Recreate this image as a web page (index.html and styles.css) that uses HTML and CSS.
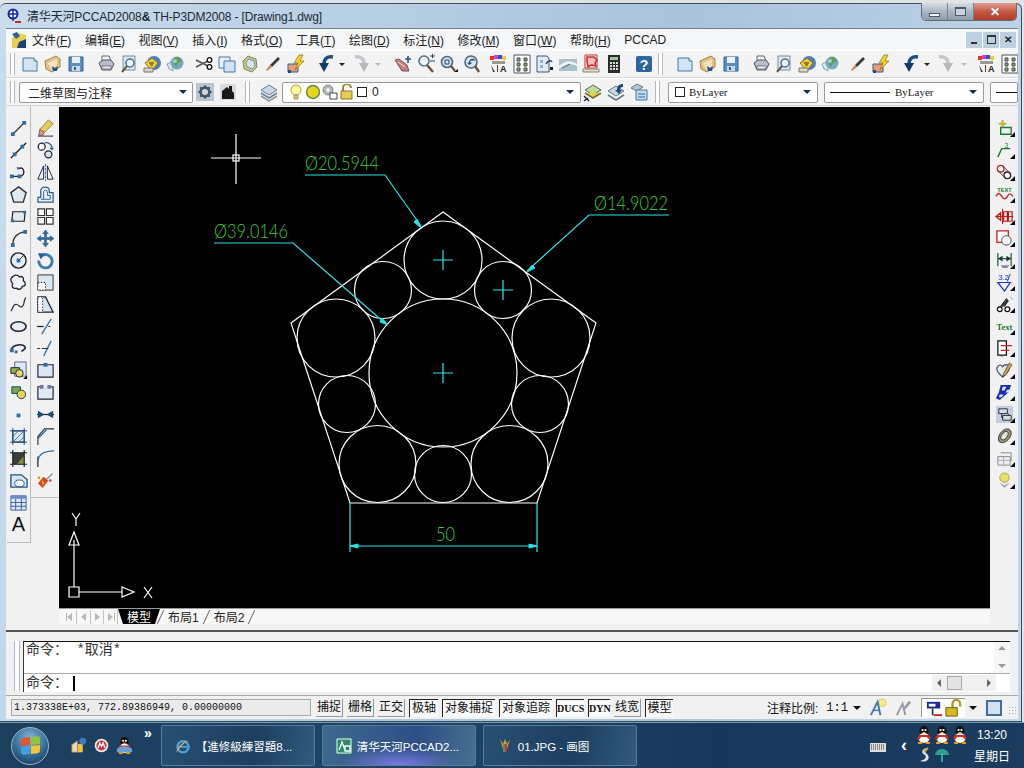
FILE: index.html
```html
<!DOCTYPE html>
<html lang="zh-CN">
<head>
  <meta charset="UTF-8">
  <title>清华天河PCCAD2008</title>
  <link rel="stylesheet" href="styles.css">
</head>
<body>
<svg class="sprite" xmlns="http://www.w3.org/2000/svg">
  <!-- standard toolbar -->
  <symbol id="new" viewBox="0 0 20 20"><path d="M3 4h11l3 3v10H3z" fill="#d3e5f4" stroke="#47799f"/><path d="M14 4v3h3" fill="#fff" stroke="#47799f"/></symbol>
  <symbol id="open" viewBox="0 0 20 20"><path d="M2 7l11-5 4 3v8l-8 5-6-3z" fill="#e3c38c" stroke="#a98246"/><path d="M5 9l9-4v7l-6 3z" fill="#f3e2bd"/><path d="M9 12l3 2 3-2-1 5h-4z" fill="#20568c"/></symbol>
  <symbol id="save" viewBox="0 0 20 20"><path d="M3 3h14v14H3z" fill="#5b8fc0" stroke="#2f5f8c"/><path d="M6 3h8v6H6z" fill="#e8f0f8"/><path d="M6 12h8v5H6z" fill="#c8d8e8"/><path d="M8 13h2v3H8z" fill="#2f5f8c"/></symbol>
  <symbol id="print" viewBox="0 0 20 20"><path d="M6 2h7l2 5H6z" fill="#f4f4f4" stroke="#667"/><path d="M3 9l4-3h8l3 4-3 6H6z" fill="#b8bccb" stroke="#556"/><path d="M6 12h9v3H6z" fill="#eee" stroke="#778"/></symbol>
  <symbol id="preview" viewBox="0 0 20 20"><path d="M4 2h12v14H4z" fill="#dbe8f4" stroke="#6f8fa8"/><circle cx="11" cy="9" r="4" fill="#f2f6fa" stroke="#46708f" stroke-width="1.5"/><path d="M8 12l-5 6" stroke="#6a5a40" stroke-width="2"/></symbol>
  <symbol id="publish" viewBox="0 0 20 20"><circle cx="12" cy="9" r="7" fill="#4c7fc2"/><path d="M3 9l7-5 6 5-6 8z" fill="#f0cf34" stroke="#8a7420"/><path d="M7 9h5M8 11h3" stroke="#333"/><path d="M2 14h9v4H2z" fill="#d8d8c0" stroke="#777"/></symbol>
  <symbol id="globe" viewBox="0 0 20 20"><path d="M2 10l6-3v10l-4-2z" fill="#d8e4ee" stroke="#8ea4b6"/><circle cx="12" cy="9" r="6.5" fill="#79a8b8"/><path d="M9 4l5-1 3 4-4 2-2 4-2-3z" fill="#5f9b57"/><circle cx="10" cy="7" r="2" fill="#cfe3ea" opacity=".7"/></symbol>
  <symbol id="cut" viewBox="0 0 20 20"><path d="M2 6l12 6M2 13l12-6" stroke="#555" stroke-width="1.5"/><circle cx="15.5" cy="6" r="2.3" fill="#fff" stroke="#111" stroke-width="1.3"/><circle cx="15.5" cy="13" r="2.3" fill="#fff" stroke="#111" stroke-width="1.3"/></symbol>
  <symbol id="copy" viewBox="0 0 20 20"><path d="M2 3h11v11H2z" fill="#e8f1f8" stroke="#47799f"/><path d="M7 7h11v11H7z" fill="#cfe2f1" stroke="#47799f"/></symbol>
  <symbol id="paste" viewBox="0 0 20 20"><path d="M3 7l5-5 8 3 1 8-5 5-8-3z" fill="#c2c98a" stroke="#7f8a50"/><path d="M6 8l3-3 5 2 1 5-3 3-5-2z" fill="#dbe6f0" stroke="#7a8fa5"/></symbol>
  <symbol id="match" viewBox="0 0 20 20"><path d="M15 3l2 2-8 8-2-2z" fill="#3a3a3a"/><path d="M7 11l2 2-5 4-1-1z" fill="#c08a50"/></symbol>
  <symbol id="bolt" viewBox="0 0 20 20"><path d="M2 10h10v8H2z" fill="#ec9a7a" stroke="#335f8a"/><path d="M2 16h3v3H2z" fill="#214f82"/><path d="M13 1l-5 8h4l-3 7 9-9h-4l3-6z" fill="#f3cf2c" stroke="#8a7410" stroke-width=".7"/></symbol>
  <symbol id="undo" viewBox="0 0 20 20"><path d="M17 3c-6-1-9 2-9 7" fill="none" stroke="#1c4f80" stroke-width="3.5"/><path d="M3 9h10l-5 9z" fill="#123a66"/></symbol>
  <symbol id="redo" viewBox="0 0 20 20"><path d="M3 3c6-1 9 2 9 7" fill="none" stroke="#c4c8cc" stroke-width="3.5"/><path d="M17 9H7l5 9z" fill="#b4b8bc"/></symbol>
  <symbol id="pan" viewBox="0 0 20 20"><path d="M2 6l4-1 8 6 2 6H9z" fill="#cf7a74" stroke="#6c5c6c"/><path d="M5 8l7 5" stroke="#eee"/><path d="M15 2v7M12 5h6" stroke="#2b4d78" stroke-width="1.5"/></symbol>
  <symbol id="zoomrt" viewBox="0 0 20 20"><circle cx="8" cy="7" r="5" fill="#eef4f8" stroke="#4f7393" stroke-width="1.6"/><path d="M11 11l6 7" stroke="#6a5338" stroke-width="2.4"/><path d="M14 2h5M16.5 0v4M14 7h5" stroke="#345"/></symbol>
  <symbol id="zoomwin" viewBox="0 0 20 20"><circle cx="8" cy="8" r="5.5" fill="#d8e6f0" stroke="#466a88" stroke-width="1.6"/><path d="M6 6h4v4H6z" fill="none" stroke="#246"/><path d="M12 12l4 5" stroke="#6a5338" stroke-width="2.2"/><path d="M15 18h4v-3z" fill="#111"/></symbol>
  <symbol id="zoomprev" viewBox="0 0 20 20"><circle cx="9" cy="8" r="6" fill="#d9e6f0" stroke="#466a88" stroke-width="1.6"/><path d="M12 5c-3-1-5 1-5 4l-2-1 2 3 3-2-2-1c0-1 2-2 6-1z" fill="#1e4c7c"/><path d="M13 12l4 6" stroke="#6a5338" stroke-width="2.4"/></symbol>
  <symbol id="props" viewBox="0 0 20 20"><path d="M1 2h4v4H1z" fill="#e0352c"/><path d="M5 1h4v4H5z" fill="#d63ad6"/><path d="M9 1h4v4H9z" fill="#3848d8"/><path d="M13 2h4v4h-4z" fill="#e8d030"/><path d="M3 7h13v3H3z" fill="#999"/><path d="M2 11l4 7h-2zM8 11h1v7H8z" fill="#444"/><text x="11" y="18" class="svg-a">A</text></symbol>
  <symbol id="design" viewBox="0 0 20 20"><path d="M2 1h16v18H2z" fill="#fff" stroke="#556"/><path d="M5 4h3v3H5zM12 4h3v3h-3zM5 9h3v3H5zM12 9h3v3h-3zM5 14h3v3H5zM12 14h3v3h-3z" fill="#8fb65a" stroke="#445"/></symbol>
  <symbol id="sheet" viewBox="0 0 20 20"><path d="M2 2h10l2 3v13H2z" fill="#e2ecf4" stroke="#34597c"/><path d="M5 6h3v3H5zM5 11h3v3H5z" fill="#8bb0d0"/><path d="M11 10c2-4 5-4 6-2" fill="none" stroke="#345" stroke-width="1.5"/><path d="M15 13h3v3h-3z" fill="#222"/></symbol>
  <symbol id="tools" viewBox="0 0 20 20"><path d="M1 5h18v12H1z" fill="#a9c1c9"/><path d="M1 12c6-6 12-6 18-2v2c-6-3-12-2-18 3z" fill="#eef2f2"/><path d="M4 14l8-4" stroke="#667"/></symbol>
  <symbol id="markup" viewBox="0 0 20 20"><path d="M4 1h12v13H4z" fill="#fff" stroke="#b33"/><path d="M6 3h7l3 3-2 3 1 3-5-1-3 2-1-5z" fill="#f6c0c0" stroke="#d22" stroke-width="1.5"/><path d="M2 15h16v3H2z" fill="#e6e0b8" stroke="#887"/></symbol>
  <symbol id="calc" viewBox="0 0 20 20"><path d="M4 1h12v18H4z" fill="#2c2c2c"/><path d="M6 3h8v3H6z" fill="#9fc39f"/><path d="M6 8h2v2H6zM9 8h2v2H9zM12 8h2v2h-2zM6 11h2v2H6zM9 11h2v2H9zM12 11h2v2h-2zM6 14h2v2H6zM9 14h2v2H9zM12 14h2v2h-2z" fill="#ddd"/></symbol>
  <symbol id="help" viewBox="0 0 20 20"><rect x="2" y="2" width="16" height="16" rx="2" fill="#2f659e"/><text x="10" y="15.5" class="svg-q">?</text></symbol>
  <!-- layer toolbar -->
  <symbol id="wspace" viewBox="0 0 20 20"><path d="M1 1h18v18H1z" fill="#b9c6cf"/><path d="M10 3l2 2h3v3l2 2-2 2v3h-3l-2 2-2-2H5v-3l-2-2 2-2V5h3z" fill="#43586a"/><circle cx="10" cy="10" r="3" fill="#cfd9e0"/></symbol>
  <symbol id="wspace2" viewBox="0 0 20 20"><path d="M2 2h16v16H2z" fill="#d9dcdf"/><path d="M4 17V9l5-4 2 2V4h3v5l2 2v6z" fill="#191919"/></symbol>
  <symbol id="layers" viewBox="0 0 20 20"><path d="M10 3l8 5-8 5-8-5z" fill="#c8d8e4" stroke="#667f92"/><path d="M2 11l8 5 8-5" fill="none" stroke="#667f92" stroke-width="1.5"/><path d="M2 14l8 5 8-5" fill="none" stroke="#8a9aa6" stroke-width="1.5"/></symbol>
  <symbol id="bulb" viewBox="0 0 16 16"><circle cx="8" cy="6" r="5" fill="#ffffa8" stroke="#b09a20"/><path d="M6 11h4v4H6z" fill="#d8c860" stroke="#998"/></symbol>
  <symbol id="sun" viewBox="0 0 16 16"><circle cx="8" cy="8" r="6.5" fill="#e6d420" stroke="#5b8a40" stroke-width="1.4"/></symbol>
  <symbol id="gearpage" viewBox="0 0 16 16"><circle cx="6" cy="6" r="5" fill="#b0b8b0" stroke="#889"/><circle cx="6" cy="6" r="2" fill="#eee"/><path d="M8 9h7v6H8z" fill="#fff" stroke="#445"/></symbol>
  <symbol id="lock" viewBox="0 0 16 16"><path d="M4 7V4a4 4 0 0 1 8 0" fill="none" stroke="#a08a30" stroke-width="2"/><path d="M2 7h11v8H2z" fill="#e6cc50" stroke="#8a7420"/></symbol>
  <symbol id="lstate" viewBox="0 0 20 20"><path d="M10 3l8 5-8 5-8-5z" fill="#c3dc90" stroke="#567"/><path d="M2 11l8 5 8-5" fill="#e4d24a" stroke="#77702a" stroke-width="1.5"/><path d="M1 14l5 5M1 19l4-3" stroke="#123" stroke-width="1.3"/></symbol>
  <symbol id="lprev" viewBox="0 0 20 20"><path d="M2 9l8-5 8 5-8 5z" fill="#c9d8e2" stroke="#678"/><path d="M2 13l8 5 8-5" fill="none" stroke="#678" stroke-width="1.5"/><path d="M11 8c0-4 2-6 6-6v3c-2 0-3 1-3 3h2l-3 4-4-4z" fill="#1e4e80"/></symbol>
  <symbol id="lfile" viewBox="0 0 20 20"><path d="M2 6l6-4 6 3-6 4z" fill="#a9c8dc" stroke="#678"/><path d="M7 8h11v10H7z" fill="#c4dcef" stroke="#3f7aa8"/><path d="M9 12h7M9 15h7" stroke="#2f6a9a"/></symbol>
  <!-- draw -->
  <symbol id="line" viewBox="0 0 20 20"><path d="M4 16L16 4" stroke="#333" stroke-width="1.3"/><path d="M2 14h4v4H2zM14 2h4v4h-4z" fill="#2a6fa8"/></symbol>
  <symbol id="xline" viewBox="0 0 20 20"><path d="M2 18L18 2" stroke="#222" stroke-width="1.5"/><path d="M4 12h4v4H4zM12 4h4v4h-4z" fill="#2a6fa8"/></symbol>
  <symbol id="pline" viewBox="0 0 20 20"><path d="M3 14h7c5 0 7-3 5-7-1-2-3-2-5-1" fill="none" stroke="#223" stroke-width="1.4"/><path d="M1 12h4v4H1zM9 12h4v4H9z" fill="#2a6fa8"/><path d="M8 4l3 1-2 3z" fill="#2a6fa8"/></symbol>
  <symbol id="polygon" viewBox="0 0 20 20"><path d="M10 2l8 6-3 10H5L2 8z" fill="#dfe9f2" stroke="#333" stroke-width="1.5"/></symbol>
  <symbol id="rect" viewBox="0 0 20 20"><path d="M4 5h13l-1 10H3z" fill="#dfe9f2" stroke="#222" stroke-width="1.3"/><path d="M2 13h3v3H2zM15 4h3v3h-3z" fill="#2a6fa8"/></symbol>
  <symbol id="arc" viewBox="0 0 20 20"><path d="M4 17C4 9 9 4 17 3" fill="none" stroke="#333" stroke-width="1.5"/><path d="M2 15h4v4H2zM15 1h4v4h-4z" fill="#2a6fa8"/></symbol>
  <symbol id="circle" viewBox="0 0 20 20"><circle cx="10" cy="10" r="8" fill="#e6edf3" stroke="#223" stroke-width="1.5"/><path d="M10 10l5-5" stroke="#333"/><path d="M8 8h4v4H8z" fill="#2a6fa8"/></symbol>
  <symbol id="cloud" viewBox="0 0 20 20"><path d="M5 3c3-2 5 0 6 1 3-1 5 1 4 4 3 2 3 6-1 6 0 3-4 4-6 2-4 1-6-2-4-5C1 9 1 5 5 3z" fill="#f0f4f8" stroke="#223" stroke-width="1.4"/></symbol>
  <symbol id="spline" viewBox="0 0 20 20"><path d="M2 17c2-2 2-8 6-7s3 4 6 2 1-8 4-9" fill="none" stroke="#333" stroke-width="1.3"/></symbol>
  <symbol id="ellipse" viewBox="0 0 20 20"><ellipse cx="10" cy="10" rx="8" ry="5" fill="#e6edf3" stroke="#223" stroke-width="1.7"/></symbol>
  <symbol id="earc" viewBox="0 0 20 20"><path d="M3 11C2 6 17 4 17 9c0 2-2 3-4 4" fill="none" stroke="#223" stroke-width="1.7"/><path d="M1 10h4v4H1zM6 12h3v3H6z" fill="#2a6fa8"/></symbol>
  <symbol id="insert" viewBox="0 0 20 20"><path d="M6 1h12v15H6z" fill="#dbe8f3" stroke="#668"/><path d="M2 7h9v6H2z" fill="#89b44a" stroke="#223"/><circle cx="11" cy="13" r="4" fill="#e6d86a" stroke="#223"/><path d="M15 19l4-4v4z" fill="#000"/></symbol>
  <symbol id="block" viewBox="0 0 20 20"><path d="M3 4h9v7H3z" fill="#74aa50" stroke="#1f3e66"/><circle cx="13" cy="12" r="4.5" fill="#ded65c" stroke="#334"/></symbol>
  <symbol id="point" viewBox="0 0 20 20"><path d="M8 9h4v4H8z" fill="#2a6fa8"/></symbol>
  <symbol id="hatch" viewBox="0 0 20 20"><path d="M4 4h12v12H4z" fill="#dbe6ee" stroke="#1f4d78" stroke-width="1.3"/><path d="M4 10l6-6M4 16L16 4M10 16l6-6" stroke="#46789f"/><path d="M1 4h18M1 16h18M4 1v18M16 1v18" stroke="#1f4d78"/></symbol>
  <symbol id="grad" viewBox="0 0 20 20"><path d="M4 4h12v12H4z" fill="#3d3d33"/><path d="M8 16l8-9v9z" fill="#8a8a55"/><path d="M1 4h18M1 16h18M4 1v18M16 1v18" stroke="#123" stroke-width="1.2"/></symbol>
  <symbol id="region" viewBox="0 0 20 20"><path d="M2 4h11l6 5v8H2z" fill="#d8e6f2" stroke="#24587f" stroke-width="1.4"/><ellipse cx="11" cy="13" rx="5" ry="3.5" fill="#fff" stroke="#24587f"/></symbol>
  <symbol id="table" viewBox="0 0 20 20"><path d="M2 3h16v15H2z" fill="#dfe7f7" stroke="#3a5ea8"/><path d="M2 3h16v3H2z" fill="#6b88c8"/><path d="M2 10h16M2 14h16M7 6v12M13 6v12" stroke="#3a5ea8"/></symbol>
  <!-- modify -->
  <symbol id="erase" viewBox="0 0 20 20"><path d="M13 1l5 4-9 9-5-3z" fill="#e6cc5e" stroke="#9a8a3a"/><path d="M4 11l5 3-2 3H3z" fill="#d69a9a" stroke="#855"/><path d="M2 18h16" stroke="#223"/></symbol>
  <symbol id="copyobj" viewBox="0 0 20 20"><circle cx="6" cy="6" r="3.7" fill="#fff" stroke="#223" stroke-width="1.3"/><circle cx="13" cy="14" r="3.7" fill="#d8e4ee" stroke="#223" stroke-width="1.3"/><path d="M9 2c4-1 7 1 8 5" fill="none" stroke="#2a5f92" stroke-width="1.5"/><path d="M14 7h5l-2 3z" fill="#2a5f92"/></symbol>
  <symbol id="mirror" viewBox="0 0 20 20"><path d="M8 3L2 17h6zM12 3l6 14h-6z" fill="#f0f4f8" stroke="#223"/><path d="M10 1v18" stroke="#2a6fa8" stroke-dasharray="3 1"/></symbol>
  <symbol id="offset" viewBox="0 0 20 20"><path d="M2 18V13h3V6c0-5 9-5 9 0v2h4v10z" fill="#e8f0f6" stroke="#2a5f92" stroke-width="1.3"/><path d="M5 15h10v-4h-3V7c0-2-4-2-4 0v8" fill="none" stroke="#2a5f92"/></symbol>
  <symbol id="array" viewBox="0 0 20 20"><path d="M2 2h7v7H2zM11 2h7v7h-7zM2 11h7v7H2zM11 11h7v7h-7z" fill="#fff" stroke="#333" stroke-width="1.2"/></symbol>
  <symbol id="move" viewBox="0 0 20 20"><path d="M10 1l3 4h-2v4h4V7l4 3-4 3v-2h-4v4h2l-3 4-3-4h2v-4H5v2l-4-3 4-3v2h4V5H7z" fill="#2e6da4" stroke="#1d4468" stroke-width=".5"/></symbol>
  <symbol id="rotate" viewBox="0 0 20 20"><path d="M6 5a7 7 0 1 1-3 5" fill="none" stroke="#3d7cb0" stroke-width="3"/><path d="M2 2l7 1-4 6z" fill="#2a5f92"/></symbol>
  <symbol id="scale" viewBox="0 0 20 20"><path d="M2 2h16v16H2z" fill="#d8e6f2" stroke="#333"/><path d="M2 10h8v8H2z" fill="#fff" stroke="#222" stroke-dasharray="1.5 1.5"/></symbol>
  <symbol id="stretch" viewBox="0 0 20 20"><path d="M2 2h8l8 16H2z" fill="#d8e6f2" stroke="#223" stroke-width="1.3"/><path d="M2 2h5v16H2z" fill="#fff" stroke="#223" stroke-dasharray="1.5 1.5"/></symbol>
  <symbol id="trim" viewBox="0 0 20 20"><path d="M1 10h7" stroke="#223" stroke-width="1.3"/><path d="M16 2L6 18" stroke="#2a6fa8" stroke-width="1.3"/><path d="M13 10h3" stroke="#223" stroke-dasharray="2 1"/></symbol>
  <symbol id="extend" viewBox="0 0 20 20"><path d="M1 10h3M6 10h3" stroke="#334" stroke-width="1.3"/><path d="M16 2L8 18" stroke="#2a6fa8" stroke-width="1.3"/><path d="M9 10h4" stroke="#223"/></symbol>
  <symbol id="brk1" viewBox="0 0 20 20"><path d="M2 4h16v13H2z" fill="#dbe8f3" stroke="#223" stroke-width="1.2"/><path d="M8 2h4v4H8z" fill="#2a6fa8"/></symbol>
  <symbol id="brk2" viewBox="0 0 20 20"><path d="M5 4H2v13h16V4h-3" fill="#dfeaf4" stroke="#223" stroke-width="1.2"/><path d="M4 2h4v4H4zM12 2h4v4h-4z" fill="#77a"/></symbol>
  <symbol id="join" viewBox="0 0 20 20"><path d="M1 10h18" stroke="#223" stroke-width="1.3"/><path d="M2 6l7 4-7 4zM18 6l-7 4 7 4z" fill="#1f4d78"/></symbol>
  <symbol id="chamfer" viewBox="0 0 20 20"><path d="M2 19V10l7-8h10" fill="none" stroke="#333" stroke-width="1.2"/><path d="M2 12L11 3" stroke="#2a6fa8" stroke-width="1.5"/></symbol>
  <symbol id="fillet" viewBox="0 0 20 20"><path d="M2 19V8" stroke="#223" stroke-width="1.3"/><path d="M2 12C3 6 8 2 19 2" fill="none" stroke="#2a6fa8" stroke-width="1.5"/></symbol>
  <symbol id="explode" viewBox="0 0 20 20"><path d="M2 13l6-7 5 4-6 8z" fill="#d84a1c"/><path d="M6 10l3 2-2 3z" fill="#f0c040"/><path d="M11 8l6-6 1 1-6 6z" fill="#889"/><circle cx="15" cy="10" r="1.3" fill="#c33"/><circle cx="3" cy="7" r="1.3" fill="#e80"/></symbol>
  <!-- pccad tools -->
  <symbol id="r1" viewBox="0 0 20 20"><path d="M6 9h11v7H6z" fill="none" stroke="#1a7a30" stroke-width="1.5"/><path d="M8 1l1 3 3 1-3 1-1 3-1-3-3-1 3-1z" fill="#e8d020" stroke="#887010" stroke-width=".5"/></symbol>
  <symbol id="r2" viewBox="0 0 20 20"><path d="M3 17l4-9h9" fill="none" stroke="#1a7a30" stroke-width="1.5"/><text x="10" y="7" class="svg-r">3</text></symbol>
  <symbol id="r3" viewBox="0 0 20 20"><circle cx="6" cy="6" r="3.5" fill="#fff" stroke="#c22" stroke-width="1.4"/><circle cx="13" cy="13" r="3.5" fill="#fff" stroke="#222" stroke-width="1.4"/><path d="M3 8l8 8M8 3l8 8" stroke="#333"/></symbol>
  <symbol id="r4" viewBox="0 0 20 20"><text x="10" y="7" class="svg-text">TEXT</text><path d="M1 12c3-5 4-3 6 0s4 4 6 0 3-3 6 0" fill="none" stroke="#c22" stroke-width="1.4"/></symbol>
  <symbol id="r5" viewBox="0 0 20 20"><path d="M1 10h18M8 2v16" stroke="#c22" stroke-width="1.2"/><path d="M1 10l5-4v8zM9 5h4v10H9zM14 5h4v10h-4z" fill="none" stroke="#b11" stroke-width="1.3"/></symbol>
  <symbol id="r6" viewBox="0 0 20 20"><path d="M2 2h12v12H2z" fill="#fff" stroke="#c22" stroke-width="1.4"/><circle cx="12" cy="12" r="5" fill="#fff" stroke="#445"/></symbol>
  <symbol id="r7" viewBox="0 0 20 20"><path d="M3 2v14M17 2v14M3 8h14" stroke="#1a6a38" stroke-width="1.3"/><path d="M3 8l5-3v6zM17 8l-5-3v6z" fill="#234"/><path d="M6 15h9l-2 3H8z" fill="#88a"/></symbol>
  <symbol id="r8" viewBox="0 0 20 20"><text x="9" y="7.5" class="svg-blue">3.2</text><path d="M3 10h13l-6 9z" fill="none" stroke="#2233bb" stroke-width="1.3"/><path d="M16 1l-3 8" stroke="#2233bb"/></symbol>
  <symbol id="r9" viewBox="0 0 20 20"><circle cx="5" cy="15" r="2.5" fill="#fff" stroke="#111" stroke-width="1.3"/><circle cx="13" cy="15" r="2.5" fill="#fff" stroke="#111" stroke-width="1.3"/><path d="M5 13l7-9 2 2-4 6" fill="#3a4a3a" stroke="#111"/><path d="M16 2l3 3" stroke="#9a9"/></symbol>
  <symbol id="r10" viewBox="0 0 20 20"><text x="10" y="14" class="svg-green">Text</text></symbol>
  <symbol id="r11" viewBox="0 0 20 20"><path d="M3 2h9v15H3z" fill="#fff" stroke="#111" stroke-width="1.3"/><path d="M6 7h12M6 12h9" stroke="#c22" stroke-width="1.5"/><path d="M7 17v2" stroke="#1a7a30"/></symbol>
  <symbol id="r12" viewBox="0 0 20 20"><path d="M2 7c2-4 5-3 6-1 2-3 6-3 7 0 1 5-4 8-7 11C5 14 1 11 2 7z" fill="#e0ecf2" stroke="#445" stroke-width="1.2"/><path d="M15 2l3 2-7 11-3 1 1-3z" fill="#caa040" stroke="#444" stroke-width=".7"/></symbol>
  <symbol id="r13" viewBox="0 0 20 20"><path d="M6 2h11l-3 8-9 8-4-2 3-6z" fill="#1a2cb8"/><path d="M8 4h4l-2 4H7zM13 7h3l-2 3h-3zM5 12h4l-2 3H4z" fill="#dfe8f8"/></symbol>
  <symbol id="r14" viewBox="0 0 20 20"><path d="M1 1h18v18H1z" fill="#c6cde0"/><path d="M4 4h9v5H4zM8 11h9v5H8z" fill="#d9dde8" stroke="#233"/><path d="M7 9v4h2M14 9v2" stroke="#233" fill="none"/></symbol>
  <symbol id="r15" viewBox="0 0 20 20"><path d="M4 15C2 9 8 2 13 2c5 0 5 6 2 10s-8 6-11 3z" fill="#9a9a68" stroke="#334"/><ellipse cx="10" cy="9" rx="3" ry="5" fill="#e6e6ce" stroke="#445" transform="rotate(35 10 9)"/></symbol>
  <symbol id="r16" viewBox="0 0 20 20"><path d="M3 8h13v9H3z" fill="#eee" stroke="#889"/><path d="M6 4h11v9" fill="none" stroke="#889"/><path d="M3 12h13M9 8v9" stroke="#aab"/></symbol>
  <symbol id="r17" viewBox="0 0 20 20"><circle cx="10" cy="7" r="5" fill="#e8e060" stroke="#aaa070"/><path d="M4 12l6 6 6-6-6 3z" fill="#aaa"/></symbol>
  <!-- status and taskbar -->
  <symbol id="anno" viewBox="0 0 20 20"><circle cx="14" cy="5" r="4" fill="#f6ee80" stroke="#ddc860"/><path d="M2 18L9 4l3 14" fill="none" stroke="#3f7ab0" stroke-width="2"/><path d="M5 13h6" stroke="#3f7ab0" stroke-width="1.5"/></symbol>
  <symbol id="anno2" viewBox="0 0 20 20"><path d="M3 18L9 6l3 12" fill="none" stroke="#99a" stroke-width="2"/><path d="M9 11l7-8 2 2-7 8z" fill="#99a"/></symbol>
  <symbol id="lockicon" viewBox="0 0 20 20"><path d="M2 3h14v7H2z" fill="#1a2a96"/><path d="M4 5h7v3H4z" fill="#fff"/><path d="M8 10v7" stroke="#123" stroke-width="1.6"/><path d="M9 17h9" stroke="#c22" stroke-width="2"/></symbol>
  <symbol id="padlock" viewBox="0 0 20 20"><path d="M9 9V5a4 4 0 0 1 8 0v3" fill="none" stroke="#b09a20" stroke-width="2.4"/><path d="M2 9h12v9H2z" fill="#d8b820" stroke="#6a5a10"/></symbol>
  <symbol id="penguin" viewBox="0 0 16 18"><ellipse cx="8" cy="5" rx="4.5" ry="5" fill="#111"/><ellipse cx="8" cy="12" rx="5.5" ry="5" fill="#fff"/><path d="M3 9h10l2 3-3 1-1-2H5l-2 3-2-2z" fill="#d9281c"/><circle cx="6.5" cy="4" r="1.1" fill="#fff"/><circle cx="9.5" cy="4" r="1.1" fill="#fff"/><path d="M6 6h4l-2 1.5z" fill="#f0b020"/><path d="M2 16h5l-1 2H2zM9 16h5v2h-4z" fill="#e89a10"/></symbol>
  <symbol id="ie" viewBox="0 0 20 20"><ellipse cx="10" cy="11" rx="7" ry="7" fill="none" stroke="#4aa3e0" stroke-width="3"/><path d="M4 11h12" stroke="#4aa3e0" stroke-width="2.5"/><path d="M2 18c-1-4 8-14 16-16-3 1-13 10-16 16z" fill="#f0b830"/></symbol>
</svg>

<div class="screen">
  <div class="window">
    <div class="titlebar">
      <svg class="title-icon" viewBox="0 0 16 16"><circle cx="7" cy="6" r="4.5" fill="#fff" stroke="#1a2a96" stroke-width="2"/><path d="M7 1v12M2 6h10" stroke="#1a2a96" stroke-width="1.5"/><path d="M9 13h6v2H9z" fill="#c22"/></svg>
      <span class="title-text">清华天河PCCAD2008<b>&amp;</b> TH-P3DM2008 - [Drawing1.dwg]</span>
      <div class="win-btns">
        <span class="win-btn win-min"><i class="glyph-min"></i></span>
        <span class="win-btn win-max"><i class="glyph-max"></i></span>
        <span class="win-btn win-close">✕</span>
      </div>
    </div>

    <div class="client">
      <div class="menubar">
        <svg class="menu-logo" viewBox="0 0 16 18"><path d="M1 7l7-5 7 2v13H1z" fill="#e8cf50"/><path d="M1 3l5-2 3 4-4 3z" fill="#2f5fa0"/><path d="M8 11l7-3v9H6z" fill="#1d3f7c"/></svg>
        <span class="menu-item">文件(<u>F</u>)</span>
        <span class="menu-item">编辑(<u>E</u>)</span>
        <span class="menu-item">视图(<u>V</u>)</span>
        <span class="menu-item">插入(<u>I</u>)</span>
        <span class="menu-item">格式(<u>O</u>)</span>
        <span class="menu-item">工具(<u>T</u>)</span>
        <span class="menu-item">绘图(<u>D</u>)</span>
        <span class="menu-item">标注(<u>N</u>)</span>
        <span class="menu-item">修改(<u>M</u>)</span>
        <span class="menu-item">窗口(<u>W</u>)</span>
        <span class="menu-item">帮助(<u>H</u>)</span>
        <span class="menu-item">PCCAD</span>
        <div class="mdi-btns">
          <span class="mdi-btn"><i class="mdi-min"></i></span>
          <span class="mdi-btn"><i class="mdi-restore"></i></span>
          <span class="mdi-btn mdi-x">✕</span>
        </div>
      </div>

      <div class="toolbar">
        <span class="grip"></span>
        <span class="tb"><svg><use href="#new"/></svg></span>
        <span class="tb"><svg><use href="#open"/></svg></span>
        <span class="tb"><svg><use href="#save"/></svg></span>
        <span class="tb ml7"><svg><use href="#print"/></svg></span>
        <span class="tb"><svg><use href="#preview"/></svg></span>
        <span class="tb"><svg><use href="#publish"/></svg></span>
        <span class="tb"><svg><use href="#globe"/></svg></span>
        <span class="tb ml6"><svg><use href="#cut"/></svg></span>
        <span class="tb"><svg><use href="#copy"/></svg></span>
        <span class="tb"><svg><use href="#paste"/></svg></span>
        <span class="tb"><svg><use href="#match"/></svg></span>
        <span class="tb"><svg><use href="#bolt"/></svg></span>
        <span class="tb ml7"><svg><use href="#undo"/></svg></span>
        <span class="drop"></span>
        <span class="tb ml5"><svg><use href="#redo"/></svg></span>
        <span class="drop drop-off"></span>
        <span class="tb ml10"><svg><use href="#pan"/></svg></span>
        <span class="tb"><svg><use href="#zoomrt"/></svg></span>
        <span class="tb"><svg><use href="#zoomwin"/></svg></span>
        <span class="tb"><svg><use href="#zoomprev"/></svg></span>
        <span class="tb ml4"><svg><use href="#props"/></svg></span>
        <span class="tb"><svg><use href="#design"/></svg></span>
        <span class="tb"><svg><use href="#sheet"/></svg></span>
        <span class="tb"><svg><use href="#tools"/></svg></span>
        <span class="tb"><svg><use href="#markup"/></svg></span>
        <span class="tb"><svg><use href="#calc"/></svg></span>
        <span class="tb ml7"><svg><use href="#help"/></svg></span>
        <span class="grip grip-a"></span>
        <span class="tb"><svg><use href="#new"/></svg></span>
        <span class="tb"><svg><use href="#open"/></svg></span>
        <span class="tb"><svg><use href="#save"/></svg></span>
        <span class="tb ml7"><svg><use href="#print"/></svg></span>
        <span class="tb"><svg><use href="#preview"/></svg></span>
        <span class="tb"><svg><use href="#publish"/></svg></span>
        <span class="tb"><svg><use href="#globe"/></svg></span>
        <span class="tb ml5"><svg><use href="#match"/></svg></span>
        <span class="tb"><svg><use href="#bolt"/></svg></span>
        <span class="tb ml7"><svg><use href="#undo"/></svg></span>
        <span class="drop"></span>
        <span class="tb ml4"><svg><use href="#redo"/></svg></span>
        <span class="drop drop-off drop-b"></span>
        <span class="tb ml8"><svg><use href="#props"/></svg></span>
        <span class="tb"><svg><use href="#design"/></svg></span>
      </div>

      <div class="toolbar">
        <span class="grip grip-r2"></span>
        <div class="combo combo-ws"><span class="combo-text">二维草图与注释</span><i class="arrow"></i></div>
        <span class="tb"><svg><use href="#wspace"/></svg></span>
        <span class="tb"><svg><use href="#wspace2"/></svg></span>
        <span class="grip grip-b"></span>
        <span class="tb"><svg><use href="#layers"/></svg></span>
        <div class="combo combo-layer">
          <svg class="mini"><use href="#bulb"/></svg>
          <svg class="mini"><use href="#sun"/></svg>
          <svg class="mini"><use href="#gearpage"/></svg>
          <svg class="mini"><use href="#lock"/></svg>
          <i class="swatch"></i><span class="combo-text">0</span><i class="arrow"></i>
        </div>
        <span class="tb"><svg><use href="#lstate"/></svg></span>
        <span class="tb"><svg><use href="#lprev"/></svg></span>
        <span class="tb"><svg><use href="#lfile"/></svg></span>
        <span class="grip grip-c"></span>
        <div class="combo combo-color"><i class="swatch"></i><span class="combo-text serif">ByLayer</span><i class="arrow"></i></div>
        <div class="combo combo-lt"><i class="ltline"></i><span class="combo-text serif">ByLayer</span><i class="arrow"></i></div>
        <div class="combo combo-lw"><i class="ltline"></i></div>
      </div>

      <div class="main">
        <div class="left-tools">
          <div class="tool-col">
            <span class="tool"><svg><use href="#line"/></svg></span>
            <span class="tool"><svg><use href="#xline"/></svg></span>
            <span class="tool"><svg><use href="#pline"/></svg></span>
            <span class="tool"><svg><use href="#polygon"/></svg></span>
            <span class="tool"><svg><use href="#rect"/></svg></span>
            <span class="tool"><svg><use href="#arc"/></svg></span>
            <span class="tool"><svg><use href="#circle"/></svg></span>
            <span class="tool"><svg><use href="#cloud"/></svg></span>
            <span class="tool"><svg><use href="#spline"/></svg></span>
            <span class="tool"><svg><use href="#ellipse"/></svg></span>
            <span class="tool"><svg><use href="#earc"/></svg></span>
            <span class="tool"><svg><use href="#insert"/></svg></span>
            <span class="tool"><svg><use href="#block"/></svg></span>
            <span class="tool"><svg><use href="#point"/></svg></span>
            <span class="tool"><svg><use href="#hatch"/></svg></span>
            <span class="tool"><svg><use href="#grad"/></svg></span>
            <span class="tool"><svg><use href="#region"/></svg></span>
            <span class="tool"><svg><use href="#table"/></svg></span>
            <span class="tool tool-a">A</span>
          </div>
          <div class="tool-col tool-col2">
            <span class="tool"><svg><use href="#erase"/></svg></span>
            <span class="tool"><svg><use href="#copyobj"/></svg></span>
            <span class="tool"><svg><use href="#mirror"/></svg></span>
            <span class="tool"><svg><use href="#offset"/></svg></span>
            <span class="tool"><svg><use href="#array"/></svg></span>
            <span class="tool"><svg><use href="#move"/></svg></span>
            <span class="tool"><svg><use href="#rotate"/></svg></span>
            <span class="tool"><svg><use href="#scale"/></svg></span>
            <span class="tool"><svg><use href="#stretch"/></svg></span>
            <span class="tool"><svg><use href="#trim"/></svg></span>
            <span class="tool"><svg><use href="#extend"/></svg></span>
            <span class="tool"><svg><use href="#brk1"/></svg></span>
            <span class="tool"><svg><use href="#brk2"/></svg></span>
            <span class="tool"><svg><use href="#join"/></svg></span>
            <span class="tool"><svg><use href="#chamfer"/></svg></span>
            <span class="tool"><svg><use href="#fillet"/></svg></span>
            <span class="tool"><svg><use href="#explode"/></svg></span>
          </div>
        </div>

        <div class="center">
          <svg class="drawing" viewBox="59 107 931 501">
            <g class="geo">
              <path d="M443 212L596 323 537 503H350L291 323z"/>
              <circle cx="443" cy="373" r="74"/>
              <circle cx="443" cy="260" r="39"/>
              <circle cx="503" cy="290" r="28.5"/>
              <circle cx="383" cy="290" r="28.5"/>
              <circle cx="336" cy="338" r="39"/>
              <circle cx="551" cy="338" r="39"/>
              <circle cx="347" cy="404" r="28.5"/>
              <circle cx="540" cy="404" r="28.5"/>
              <circle cx="377.5" cy="464" r="38.5"/>
              <circle cx="509.5" cy="464" r="38.5"/>
              <circle cx="443" cy="474" r="28.5"/>
              <path d="M211 158h50M236 134v50"/>
              <rect x="233" y="155" width="6" height="6"/>
              <path d="M69 587h10v10H69zM79 592h43M74 587v-47"/>
              <path d="M122 587l12 5-12 5zM69 545l5-13 5 13z"/>
              <path d="M72 513l4 6 4-6M76 519v7M144 587l8 11M152 587l-8 11"/>
            </g>
            <g class="dim">
              <path d="M305 175h80l36 51M669 215h-80l-62 56M214 243h79l93 81"/>
              <path d="M443 250v20M433 260h20M503 280v20M493 290h20M443 363v20M433 373h20"/>
              <path d="M350 503v49M537 503v49M350 546h187"/>
            </g>
            <g class="arrow-head">
              <path d="M421 228l-7-6 3-3zM527 272l5-7 3 3zM388 325l-8-3 2-4zM350 546l8-2v4zM537 546l-8-2v4z"/>
            </g>
            <text class="dim-text" x="305" y="170" textLength="74" lengthAdjust="spacingAndGlyphs">Ø20.5944</text>
            <text class="dim-text" x="594" y="210" textLength="74" lengthAdjust="spacingAndGlyphs">Ø14.9022</text>
            <text class="dim-text" x="214" y="238" textLength="74" lengthAdjust="spacingAndGlyphs">Ø39.0146</text>
            <text class="dim-text" x="436" y="541" textLength="19" lengthAdjust="spacingAndGlyphs">50</text>
          </svg>
          <div class="tabbar">
            <div class="tab-nav"><i class="nav nav-first"></i><i class="nav nav-prev"></i><i class="nav nav-next"></i><i class="nav nav-last"></i></div>
            <span class="tab tab-active">模型</span>
            <i class="tab-slash"></i>
            <span class="tab">布局1</span>
            <i class="tab-slash"></i>
            <span class="tab">布局2</span>
            <i class="tab-slash"></i>
          </div>
        </div>

        <div class="right-tools">
          <span class="tool rtool"><svg><use href="#r1"/></svg></span>
          <span class="tool rtool"><svg><use href="#r2"/></svg></span>
          <span class="tool rtool"><svg><use href="#r3"/></svg></span>
          <span class="tool rtool"><svg><use href="#r4"/></svg></span>
          <span class="tool rtool"><svg><use href="#r5"/></svg></span>
          <span class="tool rtool"><svg><use href="#r6"/></svg></span>
          <span class="tool rtool"><svg><use href="#r7"/></svg></span>
          <span class="tool rtool"><svg><use href="#r8"/></svg></span>
          <span class="tool rtool"><svg><use href="#r9"/></svg></span>
          <span class="tool rtool"><svg><use href="#r10"/></svg></span>
          <span class="tool rtool"><svg><use href="#r11"/></svg></span>
          <span class="tool rtool"><svg><use href="#r12"/></svg></span>
          <span class="tool rtool"><svg><use href="#r13"/></svg></span>
          <span class="tool rtool"><svg><use href="#r14"/></svg></span>
          <span class="tool rtool"><svg><use href="#r15"/></svg></span>
          <span class="tool rtool"><svg><use href="#r16"/></svg></span>
          <span class="tool rtool"><svg><use href="#r17"/></svg></span>
        </div>
      </div>

      <div class="command">
        <span class="cmd-grip"></span>
        <div class="cmd-box">
          <div class="cmd-history">
            <span class="cmd-line">命令： *取消*</span>
            <div class="vscroll"><i class="up"></i><i class="down"></i></div>
          </div>
          <div class="cmd-input">
            <span class="cmd-line">命令：</span><i class="caret"></i>
            <div class="hscroll"><i class="left"></i><i class="thumb"></i><i class="right"></i></div>
          </div>
        </div>
      </div>

      <div class="statusbar">
        <span class="coords">1.373338E+03, 772.89386949, 0.00000000</span>
        <span class="st st-up w27">捕捉</span>
        <span class="st st-up w27">栅格</span>
        <span class="st st-up w27">正交</span>
        <span class="st st-on w29">极轴</span>
        <span class="st st-on w53">对象捕捉</span>
        <span class="st st-on w53">对象追踪</span>
        <span class="st st-on w28 mono">DUCS</span>
        <span class="st st-on w22 mono">DYN</span>
        <span class="st st-up w27">线宽</span>
        <span class="st st-on w28">模型</span>
        <span class="scale-label">注释比例:</span>
        <span class="scale-value">1:1</span><i class="arrow arrow-blk"></i>
        <svg class="st-icon anno-first"><use href="#anno"/></svg>
        <svg class="st-icon"><use href="#anno2"/></svg>
        <span class="lock-box"><svg class="st-icon"><use href="#lockicon"/></svg><svg class="st-icon"><use href="#padlock"/></svg></span>
        <i class="arrow arrow-blk arrow-lock"></i>
        <span class="clean-screen"></span>
        <span class="size-grip"></span>
      </div>
    </div>
  </div>

  <div class="taskbar">
    <div class="orb"><span class="flag"><i class="f-r"></i><i class="f-g"></i><i class="f-b"></i><i class="f-y"></i></span></div>
    <div class="quick">
      <svg viewBox="0 0 20 20"><path d="M2 9l7-5v14H2z" fill="#e8d8b0" stroke="#864"/><path d="M9 8h6v10H9z" fill="#f0c040"/><circle cx="15" cy="5" r="4" fill="#3a7ac0"/></svg>
      <svg viewBox="0 0 20 20"><circle cx="10" cy="10" r="8" fill="#eee"/><circle cx="10" cy="10" r="6" fill="#c8353a"/><path d="M6 13l2-6 2 4 2-4 2 6" fill="none" stroke="#fff" stroke-width="1.5"/></svg>
      <svg viewBox="0 0 20 20"><use href="#penguin"/><path d="M1 14c5-4 12-4 18 0v4H1z" fill="#6f9fd0"/></svg>
    </div>
    <span class="more">»</span>
    <div class="task">
      <svg class="task-icon"><use href="#ie"/></svg>
      <span>【進修級練習題8...</span>
    </div>
    <div class="task task-active">
      <svg class="task-icon" viewBox="0 0 16 16"><path d="M0 0h16v16H0z" fill="#2f8a6a"/><path d="M1 1h14v14H1z" fill="none" stroke="#e6f4ee"/><path d="M3 12l3-8 3 8M9 8h5v5H9z" fill="none" stroke="#fff" stroke-width="1.3"/></svg>
      <span>清华天河PCCAD2...</span>
    </div>
    <div class="task">
      <svg class="task-icon" viewBox="0 0 16 16"><path d="M3 1l3 10h4l3-10-3 5-2-5-2 5z" fill="#d9a030"/><path d="M6 6h2v8H6z" fill="#3aa050"/><path d="M8 6h2v8H8z" fill="#c83040"/></svg>
      <span>01.JPG - 画图</span>
    </div>
    <div class="tray">
      <svg class="kbd" viewBox="0 0 16 12"><path d="M0 3h16v9H0z" fill="#ddd"/><path d="M1 5h14M1 7h14M1 9h14" stroke="#333" stroke-dasharray="1 1"/><path d="M8 3V0" stroke="#222"/></svg>
      <span class="chevron">‹</span>
      <div class="tray-icons">
        <svg><use href="#penguin"/></svg><svg><use href="#penguin"/></svg><svg><use href="#penguin"/></svg>
        <svg viewBox="0 0 16 16"><path d="M11 1C5 2 5 6 9 8c2 2 0 5-5 6 7 2 10-2 8-6-2-2-4-3-1-7z" fill="#e0e4ea"/><path d="M12 1L8 5" stroke="#d8a020" stroke-width="2"/></svg>
        <svg viewBox="0 0 16 16"><path d="M1 8c1-8 13-8 14 0z" fill="#2aa090"/><path d="M8 6v9" stroke="#3ac0a0" stroke-width="1.6"/></svg>
      </div>
      <div class="clock"><span>13:20</span><span>星期日</span></div>
    </div>
  </div>
</div>
</body>
</html>
```

FILE: styles.css
```css
* {
  box-sizing: border-box;
}
body {
  margin: 0;
  width: 1024px;
  height: 768px;
  overflow: hidden;
  background: #dfe3e6;
  color: #111;
  font-family: "Liberation Sans", "Noto Sans CJK SC", sans-serif;
  font-size: 12px;
}
i {
  display: block;
}
.sprite {
  display: none;
}
.svg-a { font: bold 9px "Liberation Sans", sans-serif; fill: #222; }
.svg-q { font: bold 14px "Liberation Sans", sans-serif; fill: #fff; text-anchor: middle; }
.svg-r { font: 7px "Liberation Sans", sans-serif; fill: #1a7a30; }
.svg-text { font: bold 6px "Liberation Sans", sans-serif; fill: #1a7a30; text-anchor: middle; }
.svg-blue { font: 8px "Liberation Sans", sans-serif; fill: #2233bb; text-anchor: middle; }
.svg-green { font: bold 9px "Liberation Serif", serif; fill: #1a7a30; text-anchor: middle; }

.screen {
  display: flex;
  flex-direction: column;
  height: 768px;
  padding-top: 3px;
}

/* window frame */
.window {
  flex: none;
  width: 1022px;
  height: 719px;
  padding: 0 3px 3px 6px;
  border: 1px solid #3e4d5c;
  border-left: 0;
  border-radius: 6px 6px 0 0;
  background: linear-gradient(100deg, #c9dcee 0%, #b6cde2 35%, #a9c3da 60%, #c2d7ea 100%);
}
.titlebar {
  display: flex;
  align-items: flex-start;
  height: 24px;
}
.title-icon {
  width: 16px;
  height: 16px;
  margin: 4px 5px 0 0;
}
.title-text {
  margin-top: 5px;
  font-size: 12px;
  letter-spacing: -0.16px;
  line-height: 16px;
  color: #1d2a36;
}
.win-btns {
  display: flex;
  margin: -1px 1px 0 auto;
  height: 18px;
  border: 1px solid #5d6d7c;
  border-top: 0;
  border-radius: 0 0 5px 5px;
  overflow: hidden;
}
.win-btn {
  display: flex;
  align-items: center;
  justify-content: center;
  height: 100%;
}
.win-min,
.win-max {
  width: 26px;
  background: linear-gradient(#d4dde5, #a9b6c2 50%, #8e9ca9);
  border-right: 1px solid #75838f;
}
.win-close {
  width: 42px;
  color: #fff;
  font-size: 12px;
  font-weight: bold;
  background: linear-gradient(#dd9f90, #c45a44 50%, #b23a25);
}
.glyph-min {
  width: 11px;
  height: 4px;
  margin-top: 6px;
  border: 1px solid #4d5a66;
  background: #eef2f5;
}
.glyph-max {
  width: 11px;
  height: 9px;
  border: 1px solid #4d5a66;
  border-top-width: 2px;
  background: #c8d3dc;
}

.client {
  display: flex;
  flex-direction: column;
  height: 691px;
  border-top: 1px solid #6d7d8c;
  background: #f1f1f1;
  overflow: hidden;
}

/* menu */
.menubar {
  flex: none;
  display: flex;
  align-items: center;
  height: 21px;
  background: #f5f6f7;
}
.menu-logo {
  width: 16px;
  height: 18px;
  margin: 0 5px 0 5px;
}
.menu-item {
  margin-right: 13.6px;
  font-size: 12px;
  color: #222;
  white-space: nowrap;
}
.mdi-btns {
  display: flex;
  margin: 0 2px 0 auto;
}
.mdi-btn {
  display: flex;
  align-items: center;
  justify-content: center;
  width: 17px;
  height: 16px;
  border-left: 1px solid #fff;
  background: #bcd0e2;
}
.mdi-x {
  font-size: 10px;
  font-weight: bold;
  color: #222;
}
.mdi-min {
  width: 6px;
  height: 2px;
  margin-top: 7px;
  background: #333;
}
.mdi-restore {
  width: 9px;
  height: 9px;
  border: 1px solid #333;
  border-top-width: 2px;
}

/* toolbars */
.toolbar {
  flex: none;
  display: flex;
  align-items: center;
  height: 28px;
  border-top: 1px solid #fff;
  border-bottom: 1px solid #d6d6d6;
  background: #f3f3f3;
  white-space: nowrap;
}
.grip {
  flex: none;
  width: 5px;
  height: 22px;
  margin: 0 3px 0 4px;
  border-left: 1px solid #b4b8bc;
  border-right: 1px solid #b4b8bc;
  background: #fff;
}
.grip-a { margin: 0 10px 0 3px; }
.grip-r2 { margin: 0 4px 0 4px; }
.grip-b { margin: 0 7.5px 0 5.5px; }
.grip-c { margin: 0 8px 0 5px; }
.tb {
  flex: none;
  display: flex;
  align-items: center;
  justify-content: center;
  width: 23px;
  height: 22px;
}
.tb svg {
  width: 20px;
  height: 20px;
}
.ml4 { margin-left: 4px; }
.ml5 { margin-left: 5px; }
.ml6 { margin-left: 6px; }
.ml7 { margin-left: 7px; }
.ml8 { margin-left: 8px; }
.ml10 { margin-left: 10px; }
.drop {
  flex: none;
  width: 6px;
  height: 3px;
  margin-left: 2px;
  border: 3px solid transparent;
  border-top: 3px solid #222;
  border-bottom: 0;
}
.drop-off {
  border-top-color: #bbb;
}
.drop-b {
  margin-left: 4px;
}
.combo {
  flex: none;
  display: flex;
  align-items: center;
  height: 21px;
  border: 1px solid #9a9a9a;
  border-radius: 2px;
  background: #fff;
  overflow: hidden;
}
.combo-ws {
  width: 174px;
  padding: 0 5px 0 8px;
}
.combo-layer {
  width: 299px;
  margin-left: 2px;
  padding: 0 6px 0 5px;
  gap: 1px;
}
.combo-color {
  width: 150px;
  padding: 0 6px 0 5px;
}
.combo-lt {
  width: 160px;
  margin-left: 6px;
  padding: 0 6px 0 5px;
}
.combo-lw {
  flex: 1;
  margin-left: 6px;
  padding-left: 5px;
}
.combo-text {
  font-size: 12px;
  color: #222;
}
.serif {
  font-family: "Liberation Serif", serif;
  font-size: 11px;
}
.arrow {
  flex: none;
  width: 8px;
  height: 4px;
  margin-left: auto;
  border: 4px solid transparent;
  border-top: 4px solid #1c2c4c;
  border-bottom: 0;
}
.mini {
  width: 16px;
  height: 16px;
}
.swatch {
  flex: none;
  width: 10px;
  height: 10px;
  margin: 0 4px 0 1px;
  border: 1px solid #222;
  background: #fff;
}
.ltline {
  flex: none;
  width: 60px;
  height: 1px;
  margin-right: 5px;
  background: #111;
}

/* main area */
.main {
  flex: none;
  display: flex;
  height: 519px;
}
.left-tools {
  flex: none;
  display: flex;
  align-items: flex-start;
  width: 53px;
  padding-left: 1px;
}
.tool-col {
  display: flex;
  flex-direction: column;
  width: 24px;
  padding: 11px 0 7px;
  border-right: 1px solid #b9bcbf;
  border-bottom: 1px solid #b9bcbf;
}
.tool-col2 {
  width: 28px;
  border-right: 0;
  padding-bottom: 6px;
}
.tool {
  flex: none;
  display: flex;
  align-items: center;
  justify-content: center;
  position: relative;
  height: 22px;
}
.tool svg {
  width: 19px;
  height: 19px;
}
.tool-a {
  font-size: 20px;
}
.center {
  display: flex;
  flex-direction: column;
  width: 931px;
}
.drawing {
  flex: none;
  display: block;
  width: 931px;
  height: 501px;
  margin-top: 1px;
  background: #000;
}
.geo {
  fill: none;
  stroke: #fff;
  stroke-width: 1.2;
}
.dim {
  fill: none;
  stroke: #2fe6e6;
  stroke-width: 1.2;
}
.arrow-head {
  fill: #22e6e6;
  stroke: #22e6e6;
}
.dim-text {
  font-family: Lato, "Liberation Sans", sans-serif;
  font-size: 20px;
  font-weight: 300;
  fill: #3ecb3e;
}
.tabbar {
  flex: none;
  display: flex;
  align-items: center;
  height: 16px;
  padding-left: 4px;
  border-top: 1px solid #9a9a9a;
  background: #f7f7f7;
}
.tab-nav {
  display: flex;
  width: 55px;
  height: 14px;
}
.nav {
  width: 14px;
  height: 14px;
  border-right: 1px solid #c4c4c4;
  position: relative;
}
.nav::after {
  content: "";
  position: absolute;
  top: 3px;
  left: 4px;
  border: 4px solid transparent;
  border-left: 0;
  border-right: 5px solid #b8b8b8;
}
.nav-next::after,
.nav-last::after {
  border-right: 0;
  border-left: 5px solid #b8b8b8;
}
.nav-first::before,
.nav-last::before {
  content: "";
  position: absolute;
  top: 3px;
  left: 3px;
  width: 1px;
  height: 8px;
  background: #b8b8b8;
}
.nav-last::before {
  left: 10px;
}
.tab {
  display: flex;
  align-items: center;
  height: 15px;
  padding: 0 7px;
  font-size: 12px;
  color: #222;
}
.tab-active {
  width: 42px;
  padding: 0 0 0 9px;
  color: #fff;
  background: #000;
  clip-path: polygon(0 0, 100% 0, 88% 100%, 12% 100%);
}
.tab-slash {
  flex: none;
  width: 1px;
  height: 14px;
  background: #666;
  transform: skewX(-25deg);
}
.right-tools {
  flex: none;
  display: flex;
  flex-direction: column;
  width: 28px;
  padding-top: 11px;
}
.rtool::after {
  content: "";
  position: absolute;
  right: 3px;
  bottom: 2px;
  border-style: solid;
  border-width: 0 0 5px 5px;
  border-color: transparent transparent #000 transparent;
}

/* command line */
.command {
  flex: none;
  display: flex;
  height: 66px;
  margin-top: 5px;
  padding: 9px 0 3px 8px;
  border-top: 2px solid #555;
  border-bottom: 1px solid #aaa;
}
.cmd-grip {
  flex: none;
  width: 6px;
  height: 50px;
  border-left: 1px solid #b4b8bc;
  border-right: 1px solid #b4b8bc;
  background: #fff;
}
.cmd-box {
  display: flex;
  flex-direction: column;
  width: 987px;
  margin-left: 3px;
  border-left: 1px solid #333;
  border-top: 1px solid #111;
  background: #fff;
}
.cmd-history {
  flex: none;
  display: flex;
  height: 32px;
  border-bottom: 1px solid #aaa;
}
.cmd-input {
  display: flex;
  align-items: center;
  flex: 1;
}
.cmd-line {
  padding-left: 2px;
  font-family: "Liberation Mono", "Noto Sans CJK SC", monospace;
  font-size: 14px;
  line-height: 16px;
  color: #333;
  white-space: nowrap;
}
.caret {
  width: 2px;
  height: 15px;
  margin-left: 5px;
  background: #000;
}
.vscroll {
  display: flex;
  flex-direction: column;
  justify-content: space-between;
  align-items: center;
  width: 16px;
  margin-left: auto;
  padding: 4px 0 5px;
  background: #f6f6f6;
}
.up {
  border: 4px solid transparent;
  border-top: 0;
  border-bottom: 4px solid #999;
}
.down {
  border: 4px solid transparent;
  border-bottom: 0;
  border-top: 4px solid #999;
}
.hscroll {
  display: flex;
  align-items: center;
  width: 64px;
  height: 16px;
  margin: 0 14px 0 auto;
  background: #f0f0f0;
}
.left {
  margin-left: 5px;
  border: 4px solid transparent;
  border-left: 0;
  border-right: 4px solid #666;
}
.thumb {
  width: 15px;
  height: 14px;
  margin-left: 6px;
  border: 1px solid #aaa;
  background: #e4e4e4;
}
.right {
  margin-left: auto;
  margin-right: 5px;
  border: 4px solid transparent;
  border-right: 0;
  border-left: 4px solid #666;
}

/* status bar */
.statusbar {
  flex: none;
  display: flex;
  align-items: center;
  height: 23px;
  padding-left: 5px;
  background: #f1f1f1;
}
.coords {
  flex: none;
  width: 300px;
  height: 17px;
  margin-right: 5px;
  padding-left: 2px;
  border: 1px solid #a8a8a8;
  background: #ebebeb;
  font-family: "Liberation Mono", monospace;
  font-size: 10px;
  line-height: 15px;
  white-space: nowrap;
}
.st {
  flex: none;
  height: 18px;
  margin-right: 4px;
  font-size: 12px;
  line-height: 17px;
  text-align: center;
  white-space: nowrap;
}
.st-up {
  border-right: 1px solid #999;
  border-bottom: 1px solid #999;
}
.st-on {
  border-left: 1px solid #222;
  border-top: 1px solid #222;
  background: #fafafa;
}
.mono {
  font-family: "Liberation Serif", serif;
  font-size: 10px;
  font-weight: bold;
}
.w22 { width: 22px; }
.w27 { width: 27px; }
.w28 { width: 28px; }
.w29 { width: 29px; }
.w53 { width: 53px; }
.scale-label {
  margin-left: 90px;
  font-size: 12px;
  white-space: nowrap;
}
.scale-value {
  margin-left: 8px;
  font-family: "Liberation Mono", monospace;
  font-size: 12px;
}
.arrow-blk {
  margin-left: 5px;
  border-top-color: #111;
}
.st-icon {
  flex: none;
  width: 19px;
  height: 19px;
}
.anno-first {
  margin-left: 8px;
  margin-right: 6px;
}
.lock-box {
  display: flex;
  flex: none;
  margin-left: 8px;
  padding: 0 3px;
  width: 44px;
  height: 19px;
  background: #fff;
  border-left: 1px solid #999;
  border-top: 1px solid #999;
}
.arrow-lock {
  margin-left: 4px;
}
.clean-screen {
  flex: none;
  width: 16px;
  height: 16px;
  margin-left: 9px;
  border: 2px solid #3f6f9c;
  background: #cfe0ee;
}
.size-grip {
  flex: none;
  width: 10px;
  height: 10px;
  margin: 6px 0 0 6px;
  background: radial-gradient(circle, #aaa 1px, transparent 1px) 0 0 / 3px 3px;
}

/* taskbar */
.taskbar {
  flex: none;
  display: flex;
  align-items: center;
  position: relative;
  height: 46px;
  border-top: 1px solid #6da0b8;
  background: linear-gradient(90deg, #1c3f5e 0%, #1d4367 45%, #17385c 70%, #1b3c5e 100%);
  color: #fff;
}
.orb {
  flex: none;
  display: flex;
  align-items: center;
  justify-content: center;
  width: 38px;
  height: 38px;
  margin-left: 11px;
  border: 1px solid #9fb6c6;
  border-radius: 50%;
  background: radial-gradient(circle at 50% 30%, #89b6d8, #2c648f 60%, #103252);
}
.flag {
  display: grid;
  grid-template-columns: 9px 9px;
  grid-template-rows: 8px 8px;
  gap: 1px;
  transform: skewY(-6deg);
}
.f-r { background: #e2562e; border-radius: 3px 0 0 0; }
.f-g { background: #8cc63f; border-radius: 0 3px 0 0; }
.f-b { background: #3f9fe0; border-radius: 0 0 0 3px; }
.f-y { background: #f6c532; border-radius: 0 0 3px 0; }
.quick {
  display: flex;
  gap: 6px;
  margin-left: 21px;
}
.quick svg {
  width: 17px;
  height: 17px;
}
.more {
  align-self: flex-start;
  margin: 2px 9px 0 11px;
  font-size: 14px;
  font-weight: bold;
  line-height: 16px;
}
.task {
  flex: none;
  display: flex;
  align-items: center;
  gap: 5px;
  width: 154px;
  height: 41px;
  margin-right: 7px;
  padding-left: 13px;
  border: 1px solid #5b7c96;
  border-radius: 2px;
  background: linear-gradient(100deg, #284f72, #1d3f60 60%, #315a7c);
  font-size: 11.5px;
  white-space: nowrap;
}
.task-active {
  background: radial-gradient(ellipse 60px 18px at 50% 100%, #7d7be8, transparent), linear-gradient(100deg, #3e6a8e, #2e4f86 60%, #47708f);
}
.task-icon {
  flex: none;
  width: 16px;
  height: 16px;
}
.tray {
  display: flex;
  align-items: center;
  margin-left: auto;
  padding-right: 11px;
}
.kbd {
  width: 16px;
  height: 12px;
}
.chevron {
  margin: 0 9px 0 15px;
  font-size: 18px;
  font-weight: bold;
}
.tray-icons {
  display: grid;
  grid-template-columns: repeat(3, 18px);
  grid-auto-rows: 20px;
  width: 54px;
}
.tray-icons svg {
  width: 16px;
  height: 18px;
}
.clock {
  display: flex;
  flex-direction: column;
  align-items: center;
  gap: 4px;
  width: 42px;
  margin-left: 1px;
  font-size: 12px;
  line-height: 18px;
}
```
